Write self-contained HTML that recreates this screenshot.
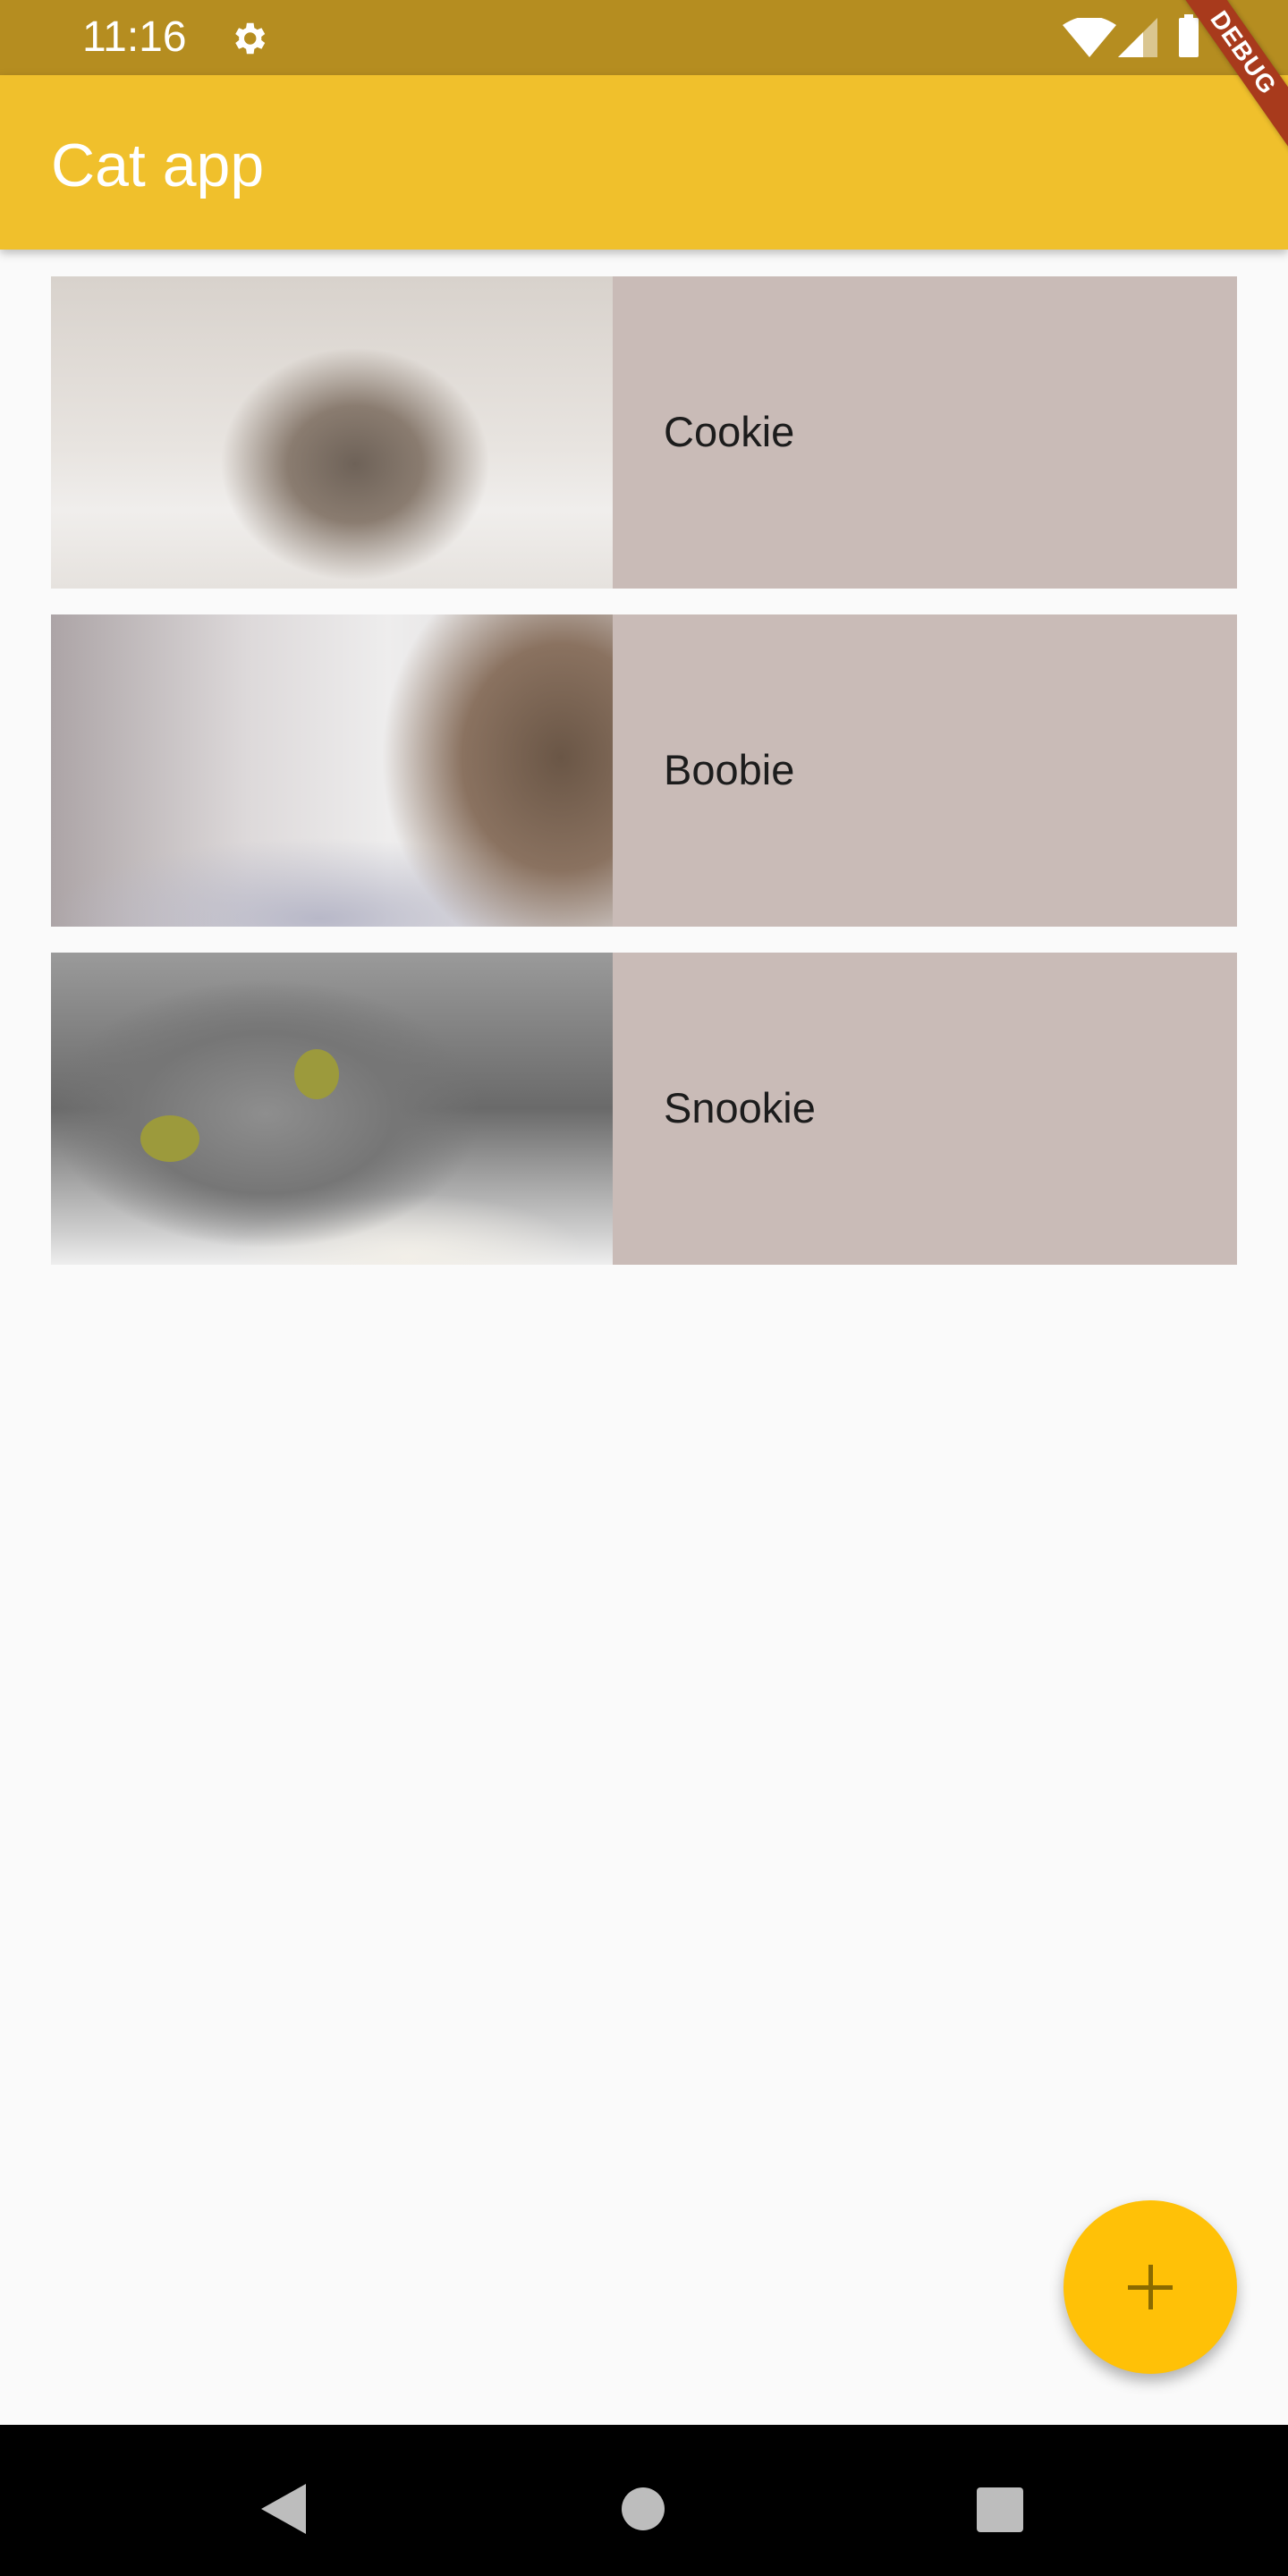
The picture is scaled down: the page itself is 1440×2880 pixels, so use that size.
<!DOCTYPE html>
<html><head><meta charset="utf-8"><style>
*{margin:0;padding:0;box-sizing:border-box}
body{width:1440px;height:2880px;background:#fafafa;position:relative;overflow:hidden;font-family:"Liberation Sans",Roboto,sans-serif}
.status{position:absolute;left:0;top:0;width:1440px;height:84px;background:#b58d20}
.appbar{position:absolute;left:0;top:84px;width:1440px;height:195px;background:#f0c02c;box-shadow:0 4px 10px rgba(0,0,0,.25)}
.title{position:absolute;left:57px;top:62px;font-size:68px;color:#fff}
.time{position:absolute;left:92px;top:14px;font-size:48px;color:#fff}
.card{position:absolute;left:57px;width:1326px;height:349px;background:#c9bbb7}
.img{position:absolute;left:0;top:0;width:628px;height:349px;overflow:hidden}
.name{position:absolute;left:685px;top:146px;font-size:47px;color:#1c1c1c}
.fab{position:absolute;left:1189px;top:2460px;width:194px;height:194px;border-radius:50%;background:#ffc107;box-shadow:0 8px 16px rgba(0,0,0,.3)}
.nav{position:absolute;left:0;top:2711px;width:1440px;height:169px;background:#000}
</style></head><body>
<div class="status">
<div class="time">11:16</div>
<svg style="position:absolute;left:255px;top:20px" width="46" height="46" viewBox="0 0 24 24"><path fill="#fff" d="M19.4 13a7.5 7.5 0 0 0 0-2l2.1-1.6-2-3.5-2.5 1a7 7 0 0 0-1.7-1L14.9 3h-4l-.4 2.9a7 7 0 0 0-1.7 1l-2.5-1-2 3.5L6.4 11a7.5 7.5 0 0 0 0 2l-2.1 1.6 2 3.5 2.5-1a7 7 0 0 0 1.7 1l.4 2.9h4l.4-2.9a7 7 0 0 0 1.7-1l2.5 1 2-3.5zM12.9 15.5a3.5 3.5 0 1 1 0-7 3.5 3.5 0 0 1 0 7z"/></svg>
<svg style="position:absolute;left:1188px;top:20px" width="60" height="44" viewBox="0 0 30 22"><path fill="#fff" d="M15 22L0 4Q15-6 30 4z"/></svg>
<svg style="position:absolute;left:1250px;top:20px" width="44" height="44" viewBox="0 0 22 22"><path fill="rgba(255,255,255,.5)" d="M22 0v22H0z"/><path fill="#fff" d="M14 8v14H0z"/></svg>
<div style="position:absolute;left:1318px;top:20px;width:22px;height:44px;background:#fff;border-radius:2px"></div>
<div style="position:absolute;left:1324px;top:16px;width:10px;height:6px;background:#fff"></div>
</div>
<div class="appbar"><div class="title">Cat app</div></div>
<div style="position:absolute;left:1260px;top:40px;width:260px;height:38px;background:#a83a1c;transform:rotate(55deg);color:#fff;font-weight:bold;font-size:28px;text-align:center;line-height:38px;letter-spacing:1px;box-shadow:0 0 6px rgba(0,0,0,.3)">DEBUG</div>

<div class="card" style="top:309px"><div class="img" style="background:radial-gradient(ellipse 150px 130px at 340px 210px,#6e6258 0%,#8a7c70 50%,rgba(200,190,180,0) 100%),linear-gradient(180deg,#d8d2cc 0%,#e8e4e0 55%,#f0eeec 75%,#e6e2de 100%)"></div><div class="name">Cookie</div></div>
<div class="card" style="top:687px"><div class="img" style="background:radial-gradient(ellipse 200px 230px at 570px 160px,#6a5646 0%,#8a7260 55%,rgba(180,170,170,0) 100%),radial-gradient(ellipse 300px 90px at 300px 340px,#b8b8c8 0%,rgba(200,200,210,0) 100%),linear-gradient(90deg,#aca4a6 0%,#ddd9da 35%,#eeeded 60%,#d8d4d4 100%)"></div><div class="name">Boobie</div></div>
<div class="card" style="top:1065px"><div class="img" style="background:radial-gradient(ellipse 240px 150px at 240px 180px,#8e8e8e 0%,#767676 60%,rgba(100,100,100,0) 100%),radial-gradient(ellipse 200px 70px at 400px 340px,#f2efe8 0%,rgba(240,240,240,0) 100%),linear-gradient(180deg,#9a9a9a 0%,#6a6a6a 50%,#cfcfcf 90%,#eeeeee 100%)"><div style="position:absolute;left:272px;top:108px;width:50px;height:56px;border-radius:50%;background:#9c9a3c"></div><div style="position:absolute;left:100px;top:182px;width:66px;height:52px;border-radius:50%;background:#9c9a3c"></div></div><div class="name">Snookie</div></div>

<div class="fab"><div style="position:absolute;left:72px;top:95px;width:50px;height:5px;background:#8a6a00"></div><div style="position:absolute;left:95px;top:72px;width:5px;height:50px;background:#8a6a00"></div></div>

<div class="nav">
<svg style="position:absolute;left:292px;top:66px" width="50" height="56" viewBox="0 0 50 56"><path fill="#bdbdbd" d="M50 0v56L0 28z"/></svg>
<div style="position:absolute;left:695px;top:70px;width:48px;height:48px;border-radius:50%;background:#bdbdbd"></div>
<div style="position:absolute;left:1092px;top:70px;width:52px;height:50px;border-radius:4px;background:#bdbdbd"></div>
</div>
</body></html>
